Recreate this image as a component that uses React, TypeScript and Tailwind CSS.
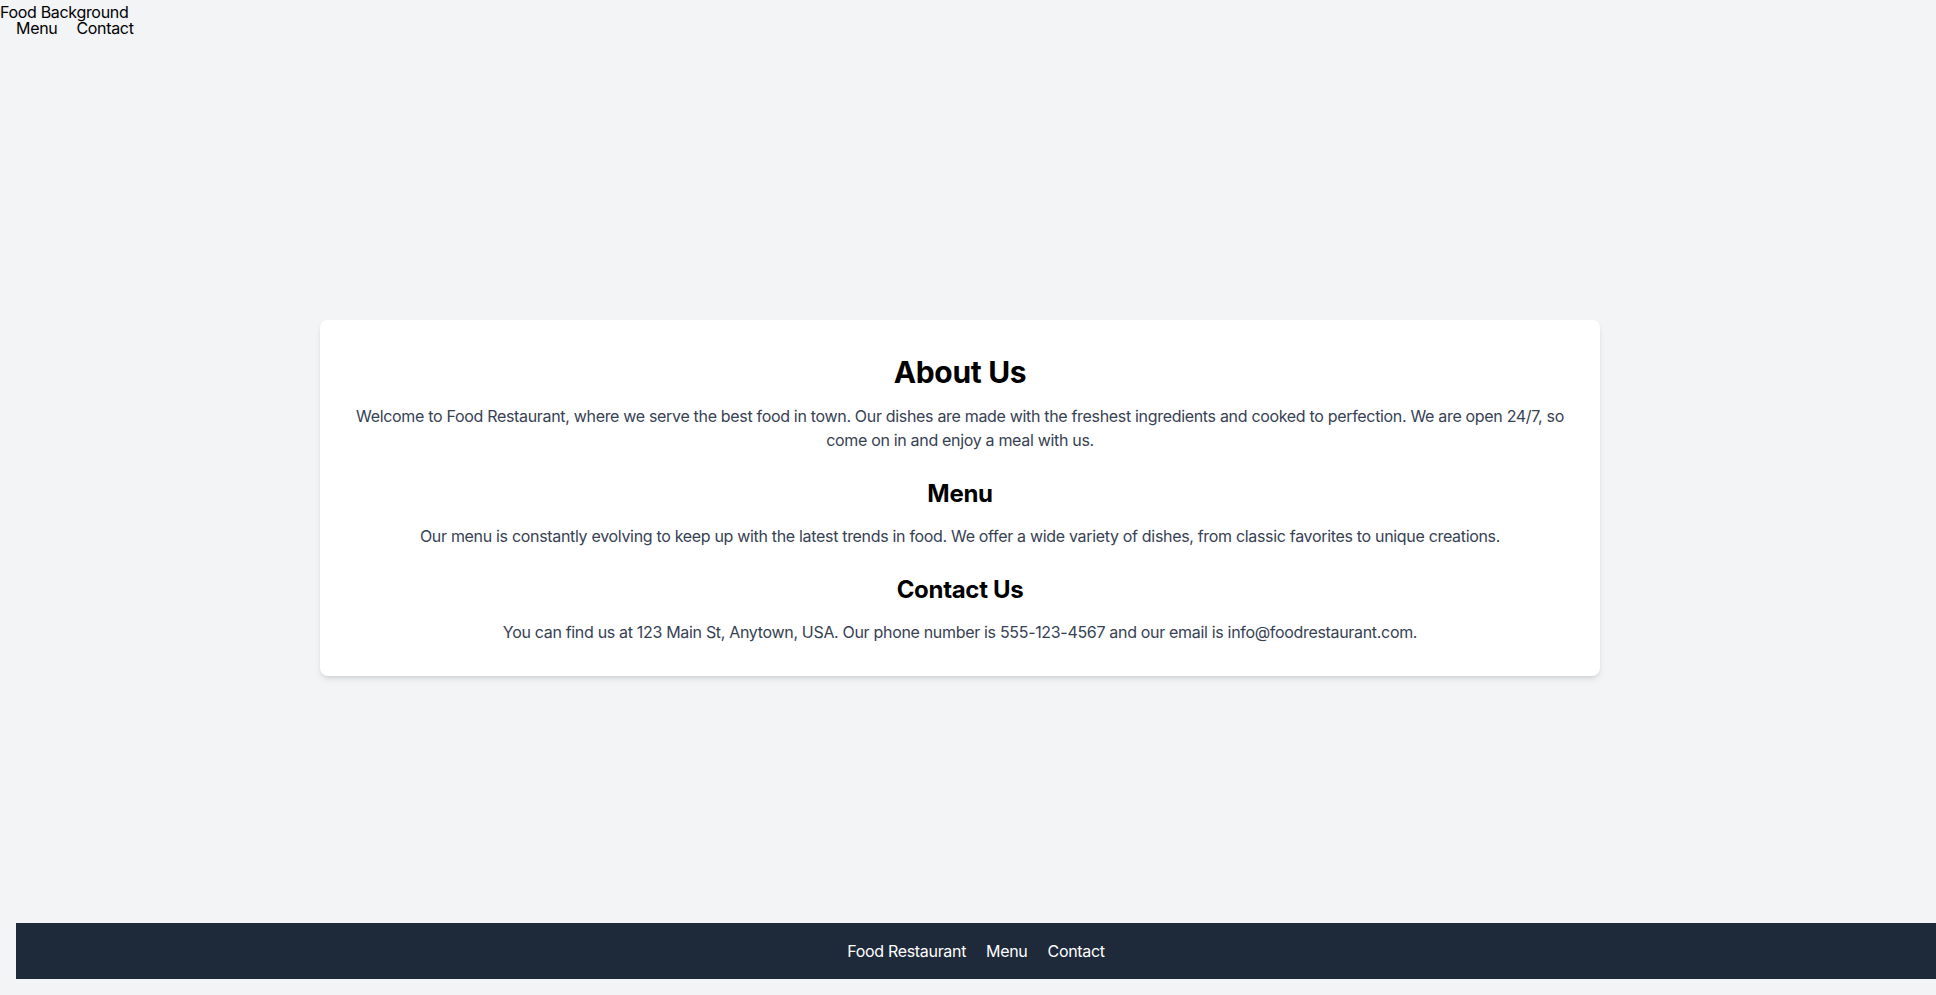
import React from "react";

export default function App() {
  return (
    <div
      className="h-screen flex flex-col bg-gray-100 text-black overflow-hidden tracking-[-0.02em]"
      style={{ fontFamily: "Inter, 'Noto Sans', sans-serif" }}
    >
      <header className="relative">
        <span className="absolute top-[4px] left-0 text-base leading-4">Food Background</span>
        <nav className="flex gap-[19px] px-4 pt-5 pb-1 text-base leading-4">
          <a>Menu</a>
          <a>Contact</a>
        </nav>
      </header>

      <main className="flex-1 pt-[280px]">
        <div className="ml-[320px] w-[1280px] bg-white rounded-lg shadow-md p-8 text-center">
          <h2 className="text-3xl font-bold pt-[2px] leading-9 h-[36px]">About Us</h2>
          <p className="text-base text-gray-700 mt-4">
            Welcome to Food Restaurant, where we serve the best food in town. Our dishes are made with the freshest
            ingredients and cooked to perfection. We are open 24/7, so come on in and enjoy a meal with us.
          </p>
          <h2 className="text-2xl font-bold mt-6 mb-4 pt-[2px] leading-8 h-[32px]">Menu</h2>
          <p className="text-base text-gray-700">
            Our menu is constantly evolving to keep up with the latest trends in food. We offer a wide variety of
            dishes, from classic favorites to unique creations.
          </p>
          <h2 className="text-2xl font-bold mt-6 mb-4 pt-[2px] leading-8 h-[32px]">Contact Us</h2>
          <p className="text-base text-gray-700">
            You can find us at 123 Main St, Anytown, USA. Our phone number is 555-123-4567 and our email is
            info@foodrestaurant.com.
          </p>
        </div>
      </main>

      <footer className="ml-4 mb-4 h-14 bg-gray-800 flex items-center justify-center gap-5 text-white text-base">
        <a>Food Restaurant</a>
        <a>Menu</a>
        <a>Contact</a>
      </footer>
    </div>
  );
}
